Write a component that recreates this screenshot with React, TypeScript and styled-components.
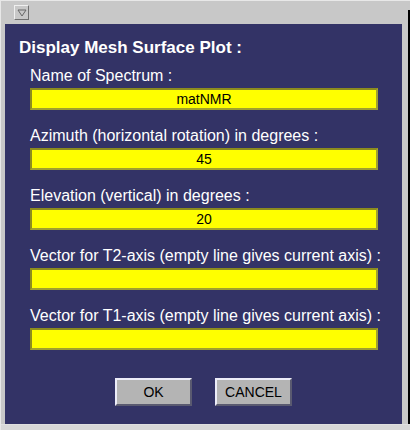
import styled, { createGlobalStyle } from 'styled-components';

const GlobalStyle = createGlobalStyle`
  html, body {
    margin: 0;
    padding: 0;
    background: #ffffff;
  }
  body {
    font-family: "Liberation Sans", Arial, sans-serif;
  }
`;

const fields = [
  { label: 'Name of Spectrum :', value: 'matNMR' },
  { label: 'Azimuth (horizontal rotation) in degrees :', value: '45' },
  { label: 'Elevation (vertical) in degrees :', value: '20' },
  { label: 'Vector for T2-axis (empty line gives current axis) :', value: '' },
  { label: 'Vector for T1-axis (empty line gives current axis) :', value: '' },
];

const App = () => {
  return (
    <>
      <GlobalStyle />
      <Window>
        <TitleBar>
          <MenuButton>
            <svg width="10" height="8" viewBox="0 0 10 8">
              <path d="M1 1 L9 1 L5 7 Z" fill="none" stroke="#666" strokeWidth="1" />
            </svg>
          </MenuButton>
        </TitleBar>
        <Body>
          <Panel>
            <Heading>Display Mesh Surface Plot :</Heading>
            {fields.map((f) => (
              <Field key={f.label}>
                <Label>{f.label}</Label>
                <Input defaultValue={f.value} />
              </Field>
            ))}
            <ButtonRow>
              <Button>OK</Button>
              <Button>CANCEL</Button>
            </ButtonRow>
          </Panel>
          <RightEdge />
        </Body>
        <BottomEdge />
      </Window>
    </>
  );
};

const Window = styled.div`
  width: 410px;
  height: 430px;
  background: #c8c8c8;
  display: flex;
  flex-direction: column;
  box-sizing: border-box;
  border-top: 1px solid #e8e8e8;
  border-left: 1px solid #e8e8e8;
`;

const TitleBar = styled.div`
  height: 23px;
  display: flex;
  align-items: center;
  padding-left: 13px;
`;

const MenuButton = styled.div`
  width: 15px;
  height: 15px;
  box-sizing: border-box;
  border-top: 1px solid #f0f0f0;
  border-left: 1px solid #f0f0f0;
  border-right: 1px solid #707070;
  border-bottom: 1px solid #707070;
  display: flex;
  align-items: center;
  justify-content: center;
`;

const Body = styled.div`
  flex: 1;
  display: flex;
  padding-left: 4px;
`;

const Panel = styled.div`
  width: 399px;
  background: #333366;
  box-sizing: border-box;
  padding: 14px 0 0 14px;
  display: flex;
  flex-direction: column;
`;

const RightEdge = styled.div`
  width: 4px;
  margin-left: 2px;
  border-right: 2px solid #000000;
  margin-top: -14px;
`;

const BottomEdge = styled.div`
  height: 5px;
  border-top: 1px solid #e0e0e0;
  background: #d8d8d8;
`;

const Heading = styled.div`
  color: #ffffff;
  font-size: 17px;
  font-weight: bold;
  line-height: 20px;
  margin-bottom: 9px;
`;

const Field = styled.div`
  display: flex;
  flex-direction: column;
  padding-left: 11px;
  margin-bottom: 17px;
`;

const Label = styled.div`
  color: #ffffff;
  font-size: 16px;
  line-height: 18px;
  margin-bottom: 3px;
`;

const Input = styled.input`
  width: 348px;
  height: 22px;
  box-sizing: border-box;
  background: #ffff00;
  border: 2px solid #8c8c1e;
  border-right-color: #a0a030;
  border-bottom-color: #a0a030;
  outline: none;
  padding: 0;
  text-align: center;
  font-family: "Liberation Sans", Arial, sans-serif;
  font-size: 14px;
  color: #000000;
`;

const ButtonRow = styled.div`
  display: flex;
  gap: 23px;
  padding-left: 96px;
  margin-top: 11px;
`;

const Button = styled.button`
  width: 77px;
  height: 28px;
  box-sizing: border-box;
  background: #b4b4b4;
  border-top: 2px solid #ececf8;
  border-left: 2px solid #ececf8;
  border-right: 2px solid #5a5a70;
  border-bottom: 2px solid #5a5a70;
  font-family: "Liberation Sans", Arial, sans-serif;
  font-size: 14px;
  color: #000000;
  padding: 0;
`;

export default App;
